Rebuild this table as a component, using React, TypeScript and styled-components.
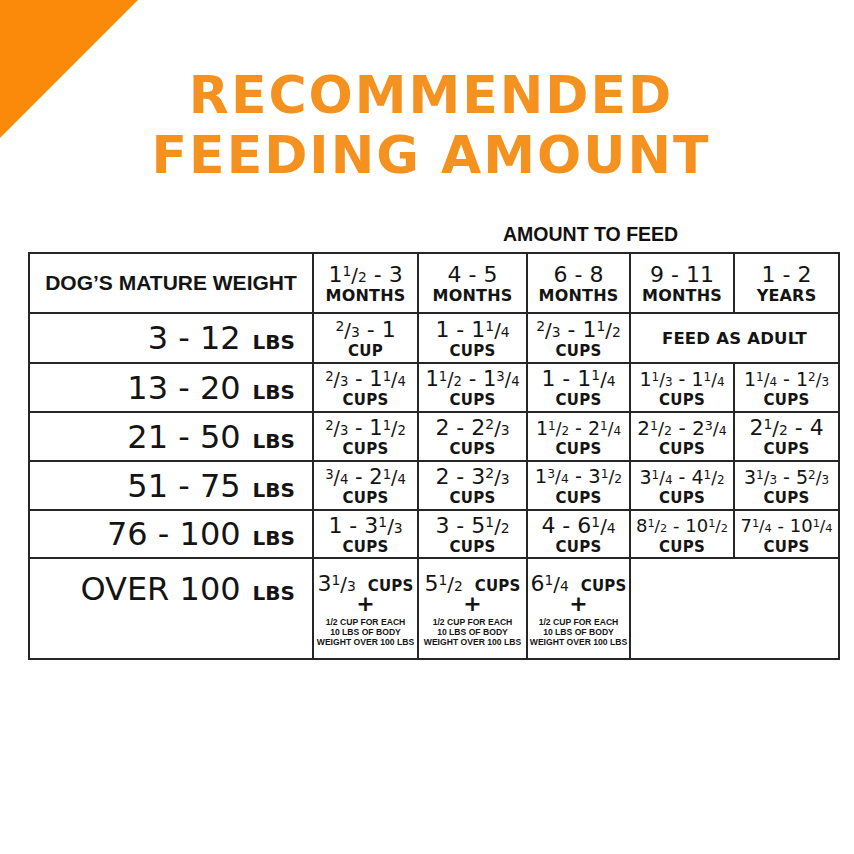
import React from "react";
import styled, { createGlobalStyle } from "styled-components";

const GlobalStyle = createGlobalStyle`
  html, body { margin: 0; padding: 0; background: #ffffff; }
  body { font-family: "DejaVu Sans", "Liberation Sans", sans-serif; color: #161616; }
`;

const Page = styled.div`
  position: relative;
  width: 854px;
  height: 854px;
  background: #ffffff;
  overflow: hidden;
`;

const Corner = styled.div`
  position: absolute;
  left: 0;
  top: 0;
  width: 138px;
  height: 138px;
  background: #fb8a0b;
  clip-path: polygon(0 0, 100% 0, 0 100%);
`;

const Title = styled.h1`
  margin: 0;
  padding: 65px 0 0 8px;
  font-family: "DejaVu Sans", sans-serif;
  font-weight: 700;
  font-size: 52px;
  line-height: 60px;
  letter-spacing: 2px;
  color: #f5911e;
  text-align: center;
`;

const FeedLabel = styled.div`
  margin-top: 39px;
  padding-left: 503px;
  font-family: "Liberation Sans", Arial, sans-serif;
  font-weight: 700;
  font-size: 19.5px;
  line-height: 20px;
  color: #111;
`;

const TableWrap = styled.div`
  margin-top: 8px;
  padding-left: 28px;
`;

const Grid = styled.table`
  border-collapse: collapse;
  table-layout: fixed;
  width: 810px;
`;

const Row = styled.tr<{ $h: number }>`
  height: ${(p) => p.$h}px;
`;

const Cell = styled.td<{ $top?: boolean }>`
  border: 2px solid #262626;
  padding: ${(p) => (p.$top ? "14px 0 0" : "0")};
  text-align: center;
  vertical-align: ${(p) => (p.$top ? "top" : "middle")};
  white-space: nowrap;
`;

const WeightCell = styled(Cell)`
  text-align: right;
  padding-right: 17px;
`;

const HeadLabel = styled.span`
  display: block;
  text-align: center;
  font-family: "Liberation Sans", Arial, sans-serif;
  font-weight: 700;
  font-size: 21px;
  line-height: 22px;
  color: #141414;
`;

const WeightNum = styled.span`
  font-family: "DejaVu Sans", sans-serif;
  font-weight: 400;
  font-size: 32px;
  line-height: 32px;
  color: #141414;
`;

const Lbs = styled.span`
  margin-left: 12px;
  font-family: "DejaVu Sans", sans-serif;
  font-weight: 700;
  font-size: 20px;
  color: #141414;
`;

const Value = styled.div<{ $size: number }>`
  font-family: "DejaVu Sans", sans-serif;
  font-weight: 400;
  font-size: ${(p) => p.$size}px;
  line-height: 22px;
  color: #141414;
`;

const Unit = styled.div<{ $size?: number }>`
  margin-top: 3px;
  font-family: "DejaVu Sans", sans-serif;
  font-weight: 700;
  font-size: ${(p) => p.$size ?? 15}px;
  line-height: 14px;
  letter-spacing: 0.2px;
  color: #141414;
`;

const InlineUnit = styled.span`
  margin-left: 12px;
  font-family: "DejaVu Sans", sans-serif;
  font-weight: 700;
  font-size: 15px;
  letter-spacing: 0.2px;
`;

const Span2 = styled.span`
  font-family: "DejaVu Sans", sans-serif;
  font-weight: 700;
  font-size: 16.5px;
  letter-spacing: 0.2px;
  color: #141414;
`;

const Num = styled.span`
  font-size: 0.63em;
  vertical-align: 0.4em;
  line-height: 1;
`;

const Slash = styled.span`
  font-size: 0.9em;
  line-height: 1;
`;

const Den = styled.span`
  font-size: 0.63em;
  line-height: 1;
`;

const Plus = styled.div`
  margin-top: 0;
  font-family: "DejaVu Sans", sans-serif;
  font-weight: 700;
  font-size: 22px;
  line-height: 14px;
  color: #141414;
`;

const Note = styled.div`
  margin-top: 6px;
  font-family: "Liberation Sans", Arial, sans-serif;
  font-weight: 700;
  font-size: 8.6px;
  line-height: 10px;
  color: #141414;
`;

function Amount({ text }: { text: string }) {
  const parts = text.split(/(\[\d+\/\d+\])/);
  return (
    <>
      {parts.map((p, i) => {
        const m = p.match(/^\[(\d+)\/(\d+)\]$/);
        if (m) {
          return (
            <React.Fragment key={i}>
              <Num>{m[1]}</Num>
              <Slash>/</Slash>
              <Den>{m[2]}</Den>
            </React.Fragment>
          );
        }
        return <React.Fragment key={i}>{p}</React.Fragment>;
      })}
    </>
  );
}

type C = { v: string; s?: number; u?: string };

const ages: C[] = [
  { v: "1[1/2] - 3", u: "MONTHS" },
  { v: "4 - 5", u: "MONTHS" },
  { v: "6 - 8", u: "MONTHS" },
  { v: "9 - 11", u: "MONTHS" },
  { v: "1 - 2", u: "YEARS" },
];

const rows: { w: string; h: number; cells: C[] }[] = [
  {
    w: "3 - 12",
    h: 50,
    cells: [
      { v: "[2/3] - 1", u: "CUP" },
      { v: "1 - 1[1/4]", u: "CUPS" },
      { v: "[2/3] - 1[1/2]", u: "CUPS" },
    ],
  },
  {
    w: "13 - 20",
    h: 49,
    cells: [
      { v: "[2/3] - 1[1/4]", s: 21 },
      { v: "1[1/2] - 1[3/4]", s: 21 },
      { v: "1 - 1[1/4]" },
      { v: "1[1/3] - 1[1/4]", s: 19 },
      { v: "1[1/4] - 1[2/3]", s: 19 },
    ],
  },
  {
    w: "21 - 50",
    h: 49,
    cells: [
      { v: "[2/3] - 1[1/2]", s: 21 },
      { v: "2 - 2[2/3]" },
      { v: "1[1/2] - 2[1/4]", s: 19 },
      { v: "2[1/2] - 2[3/4]", s: 20 },
      { v: "2[1/2] - 4" },
    ],
  },
  {
    w: "51 - 75",
    h: 49,
    cells: [
      { v: "[3/4] - 2[1/4]", s: 21 },
      { v: "2 - 3[2/3]" },
      { v: "1[3/4] - 3[1/2]", s: 19.5 },
      { v: "3[1/4] - 4[1/2]", s: 19 },
      { v: "3[1/3] - 5[2/3]", s: 19 },
    ],
  },
  {
    w: "76 - 100",
    h: 48,
    cells: [
      { v: "1 - 3[1/3]" },
      { v: "3 - 5[1/2]" },
      { v: "4 - 6[1/4]" },
      { v: "8[1/2] - 10[1/2]", s: 18 },
      { v: "7[1/4] - 10[1/4]", s: 18 },
    ],
  },
];

const overCells = ["3[1/3]", "5[1/2]", "6[1/4]"];

function AmountCell({ c, unitSize }: { c: C; unitSize?: number }) {
  return (
    <Cell>
      <Value $size={c.s ?? 22}>
        <Amount text={c.v} />
      </Value>
      <Unit $size={unitSize}>{c.u ?? "CUPS"}</Unit>
    </Cell>
  );
}

export default function App() {
  return (
    <Page>
      <GlobalStyle />
      <Corner />
      <Title>
        RECOMMENDED
        <br />
        FEEDING AMOUNT
      </Title>
      <FeedLabel>AMOUNT TO FEED</FeedLabel>
      <TableWrap>
        <Grid>
          <colgroup>
            <col style={{ width: 284 }} />
            <col style={{ width: 105 }} />
            <col style={{ width: 109 }} />
            <col style={{ width: 103 }} />
            <col style={{ width: 104 }} />
            <col style={{ width: 105 }} />
          </colgroup>
          <tbody>
            <Row $h={60}>
              <Cell>
                <HeadLabel>DOG’S MATURE WEIGHT</HeadLabel>
              </Cell>
              {ages.map((a, i) => (
                <AmountCell key={i} c={a} unitSize={16} />
              ))}
            </Row>
            {rows.map((r, ri) => (
              <Row key={ri} $h={r.h}>
                <WeightCell>
                  <WeightNum>{r.w}</WeightNum>
                  <Lbs>LBS</Lbs>
                </WeightCell>
                {r.cells.map((c, ci) => (
                  <AmountCell key={ci} c={c} />
                ))}
                {ri === 0 && (
                  <Cell colSpan={2}>
                    <Span2>FEED AS ADULT</Span2>
                  </Cell>
                )}
              </Row>
            ))}
            <Row $h={101}>
              <WeightCell $top>
                <WeightNum>OVER 100</WeightNum>
                <Lbs>LBS</Lbs>
              </WeightCell>
              {overCells.map((v, i) => (
                <Cell key={i} $top>
                  <Value $size={22}>
                    <Amount text={v} />
                    <InlineUnit>CUPS</InlineUnit>
                  </Value>
                  <Plus>+</Plus>
                  <Note>
                    1/2 CUP FOR EACH
                    <br />
                    10 LBS OF BODY
                    <br />
                    WEIGHT OVER 100 LBS
                  </Note>
                </Cell>
              ))}
              <Cell colSpan={2} />
            </Row>
          </tbody>
        </Grid>
      </TableWrap>
    </Page>
  );
}
